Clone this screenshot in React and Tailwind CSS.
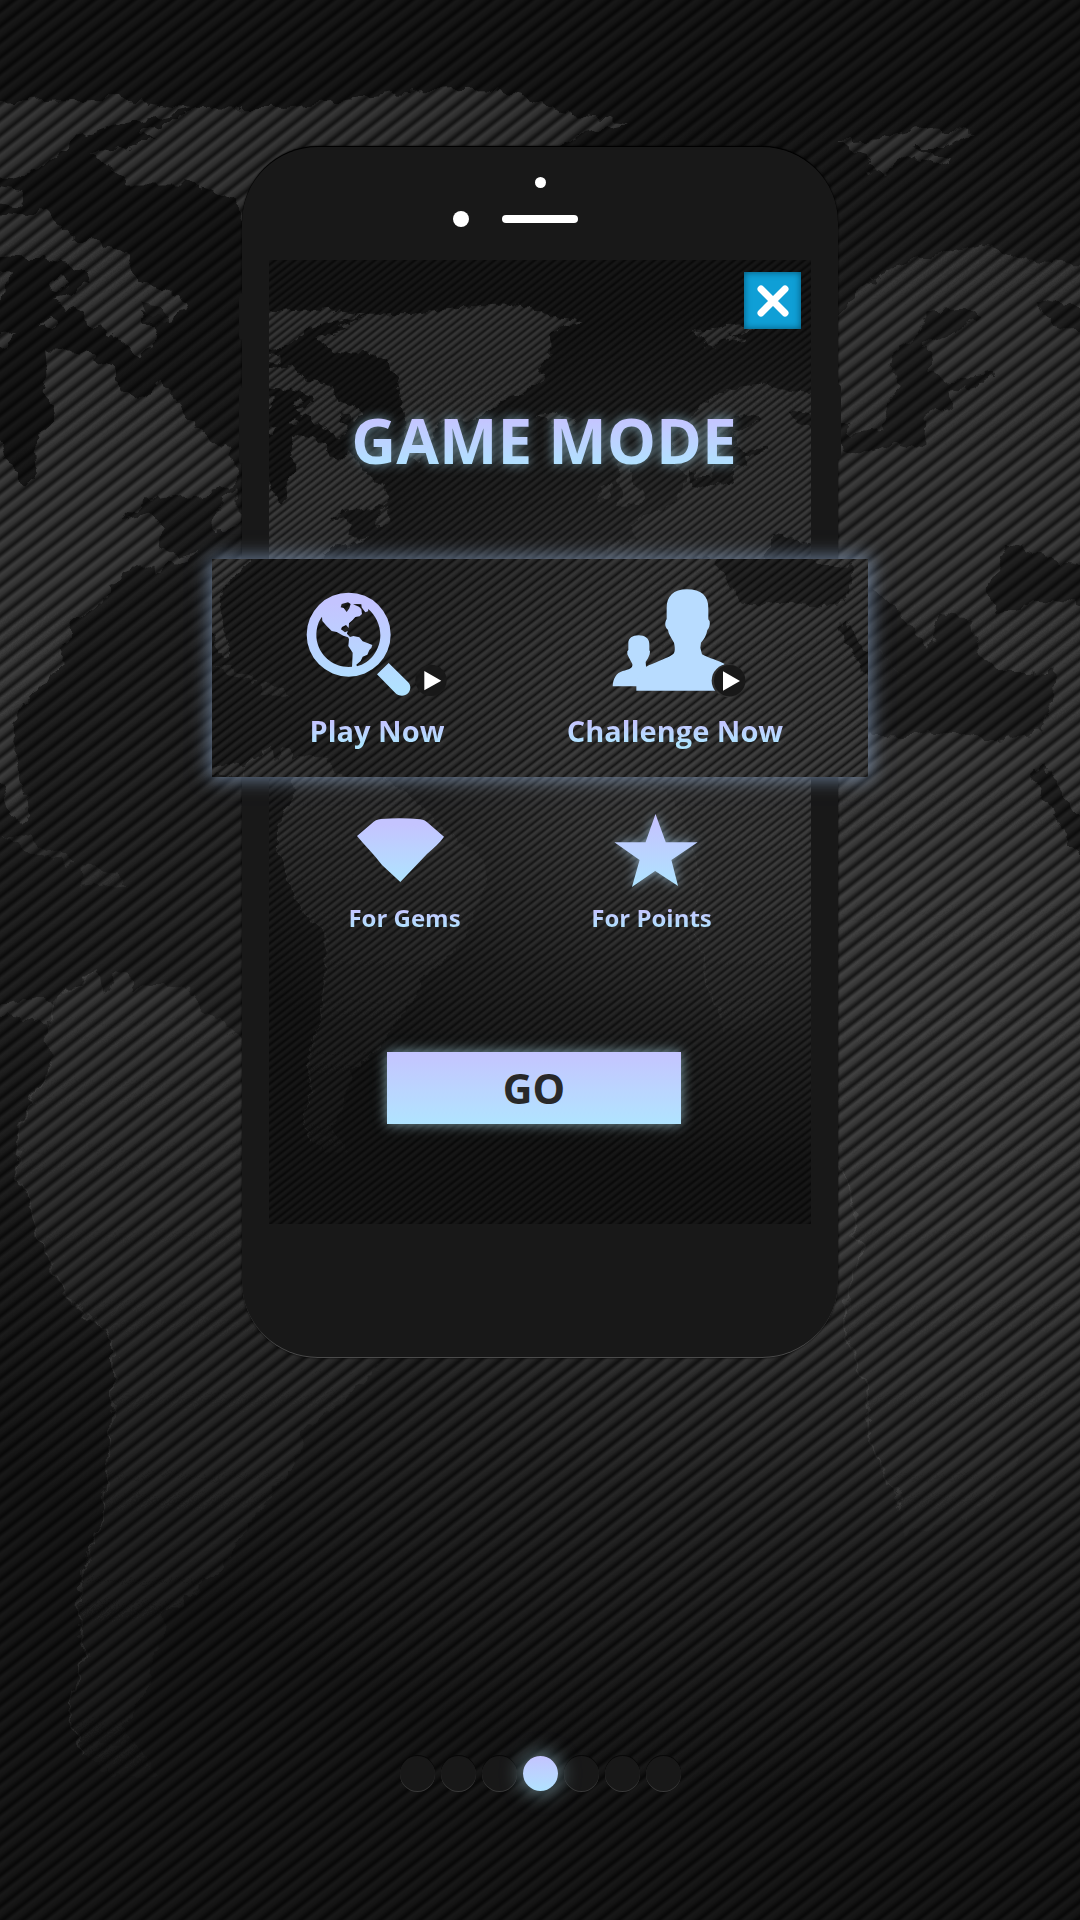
import { useId } from "react";

const TEXT_GRADIENT = "bg-linear-to-b from-[#c6c2ff] from-20% to-[#aee4ff] to-85% bg-clip-text text-transparent";

function WorldMap({ viewBox = "0 0 882 1568" }) {
  const id = useId();
  const ref = (name) => `url(#${id}${name})`;
  return (
    <svg
      className="absolute inset-0 h-full w-full"
      viewBox={viewBox}
      preserveAspectRatio="xMidYMid slice"
      aria-hidden="true"
    >
      <defs>
        <radialGradient id={id + "light"} gradientUnits="userSpaceOnUse" cx="0" cy="0" r="1" gradientTransform="translate(820 780) scale(1000 700)">
          <stop offset="0" stopColor="#505050" />
          <stop offset="0.35" stopColor="#505050" stopOpacity="0.72" />
          <stop offset="0.7" stopColor="#505050" stopOpacity="0.26" />
          <stop offset="1" stopColor="#505050" stopOpacity="0" />
        </radialGradient>
        <linearGradient id={id + "land"} gradientUnits="userSpaceOnUse" x1="0" y1="70" x2="0" y2="1450">
          <stop offset="0" stopColor="#373737" />
          <stop offset="0.35" stopColor="#3f3f3f" />
          <stop offset="0.55" stopColor="#404040" stopOpacity="0.75" />
          <stop offset="0.75" stopColor="#383838" stopOpacity="0.5" />
          <stop offset="1" stopColor="#2c2c2c" stopOpacity="0.2" />
        </linearGradient>
        <linearGradient id={id + "line"} x1="0" y1="0" x2="0" y2="1">
          <stop offset="0" stopColor="#000" stopOpacity="0" />
          <stop offset="0.35" stopColor="#000" stopOpacity="0.2" />
          <stop offset="0.7" stopColor="#000" stopOpacity="0.7" />
          <stop offset="1" stopColor="#000" stopOpacity="0" />
        </linearGradient>
        <pattern id={id + "stripes"} patternUnits="userSpaceOnUse" width="20" height="10" patternTransform="rotate(-38)">
          <rect width="20" height="10" fill={ref("line")} />
        </pattern>
        <filter id={id + "coast"} x="-5%" y="-5%" width="110%" height="110%">
          <feTurbulence type="fractalNoise" baseFrequency="0.07" numOctaves="3" seed="4" />
          <feDisplacementMap in="SourceGraphic" scale="14" xChannelSelector="R" yChannelSelector="G" />
        </filter>
      </defs>
      <rect width="882" height="1568" fill="#181818" />
      <rect width="882" height="1568" fill={ref("light")} />
      <g filter={ref("coast")}>
        <g fill={ref("land")}>
          {/* Arctic islands and Canada */}
          <path d="M-20 85L50 81L95 81L155 89L100 102L60 115L38 135L10 147L-20 146Z" />
          <path d="M-20 152L20 157L15 170L-20 165Z" />
          <path d="M-20 172L20 178L38 173L62 195L78 197L86 203L102 205L112 230L135 237L150 247L152 255L138 260L120 255L112 252L128 268L126 285L115 290L105 284L85 270L62 255L42 245L60 240L74 230L68 220L50 215L30 211L-20 208Z" />
          <path d="M-20 215L8 222L6 243L-20 250Z" />
          <ellipse cx="49" cy="233" rx="8" ry="5" />
          <ellipse cx="42" cy="263" rx="8" ry="5" />
          {/* North America */}
          <path d="M-20 275L14 272L10 280L-20 290Z" />
          <path d="M-20 345L2 360L6 376L22 395L30 385L28 362L46 345L44 332L34 322L38 305L36 287L70 287L93 302L96 318L112 326L124 322L130 308L150 335L163 354L190 372L193 395L175 402L120 410L102 425L125 420L133 432L131 448L145 455L165 450L135 465L124 470L122 462L90 474L86 490L60 510L50 530L48 545L28 565L12 588L10 605L18 640L24 668L17 672L6 660L0 640L-20 635Z" />
          <path d="M172 432L184 405L194 398V430Z" />
          {/* Greenland */}
          <path d="M115 107L160 89L235 88L290 80L340 74L395 72L444 82L460 94L514 100L480 108L458 120V156L438 176L448 196L410 218L378 228L350 252L325 262L290 258L270 275L245 330L225 318L222 280L217 240L209 190L190 164L175 156L150 149L105 149L85 135L76 126L128 114Z" />
          {/* Iceland, Svalbard, Great Britain */}
          <path d="M435 252L455 250L500 258L495 270L455 275L460 262Z" />
          <path d="M682 116L715 114L735 109L760 105L797 108L770 120L745 120L775 130L770 138L745 126L722 144L708 138L710 128Z" />
          <path d="M570 326L588 334L592 365L612 380L600 398L566 400L578 378L568 362Z" />
          <path d="M540 368L558 365L556 388L538 390Z" />
          {/* Europe and Asia */}
          <path d="M902 215L868 215L840 212L800 201L785 205L745 212L725 220L695 243L680 265L656 299L652 330L668 340L680 352L665 390L640 404L610 415L590 430L600 455L550 462L548 508L575 515L608 495L632 466L660 470L680 495L700 510L715 530L745 560L902 560Z" />
          {/* Africa and Arabia */}
          <path d="M560 558L594 559L620 548L674 545L690 556L902 556V1030L855 1090L858 1135L840 1165L825 1210L790 1240L737 1254L736 1230L712 1180L708 1132L690 1088L695 1040L703 1028L697 990L686 950L668 900L640 855L570 850L508 828L490 792L486 742L484 700L496 662L512 634L533 612L534 586L553 580Z" />
          {/* Caribbean */}
          <path fillOpacity="0.6" d="M0 680L25 685L60 702L55 706L20 692Z" />
          <path fillOpacity="0.6" d="M68 708L95 712L102 722L70 724Z" />
          {/* South America */}
          <path d="M-20 820L10 820L35 814L45 825L55 806L82 792L86 812L92 794L105 796L110 806L152 808L180 838L219 862L290 930L348 974L354 1014L330 1075L308 1120L248 1170L244 1188L188 1270L182 1280L136 1318L120 1380L100 1408L130 1450L95 1450L65 1430L56 1392L70 1350L64 1338L68 1280L84 1240L93 1138L92 1092L49 1054L12 955L16 922L41 870L38 835L-20 828Z" />
        </g>
        {/* Enclosed seas and lakes */}
        <g fill="#1e1e1e" fillOpacity="0.85">
          <path d="M112 247L128 250L138 260L128 266Z" />
          <path d="M757 256L784 253L800 258L785 268L757 282L758 300L773 311L811 307L814 311L776 318L778 334L773 338L765 332L755 341L754 362L743 368L727 362L705 371L686 366L682 342L697 354L719 350L724 330L735 315L727 301L730 286L745 276Z" />
          <path d="M845 245L902 254V268L872 270L858 264Z" />
          <path d="M803 483L825 446L841 452L882 461L902 458V500L849 490L814 501Z" />
          <path fillOpacity="0.7" d="M674 546L690 560L712 600L745 601L757 597L814 603L852 598L862 567L861 547L838 548L814 548L800 534L795 505L768 502L757 530L743 508L716 480L680 492L704 510Z" />
          <path d="M842 630L856 628L875 660L902 690V735L880 700Z" />
        </g>
        <g fill="none" stroke="#fff" strokeOpacity="0.08" strokeWidth="1.5">
          <path d="M93 1092V1138L84 1240L68 1280L64 1338L70 1350L56 1392L65 1430" />
          <path d="M686 950L697 990L703 1028L695 1040L690 1088L708 1132L712 1180L736 1230" />
          <path d="M38 835L55 806L82 792M41 870L16 922L12 955L49 1054L92 1092" />
        </g>
      </g>
      <rect width="882" height="1568" fill={ref("stripes")} />
    </svg>
  );
}

function Tint({ id, y1, y2 }) {
  return (
    <linearGradient id={id} gradientUnits="userSpaceOnUse" x1="0" x2="0" y1={y1} y2={y2}>
      <stop offset="0.1" stopColor="#c4c4ff" />
      <stop offset="0.95" stopColor="#b0e2ff" />
    </linearGradient>
  );
}

function PlayBadge({ x }) {
  return (
    <g>
      <circle cx={x} cy="421" r="47" fill="#181818" />
      <path d={`M${x - 20} 393V451L${x + 31} 422Z`} fill="#fff" />
    </g>
  );
}

function GlobeSearchIcon() {
  return (
    <svg className="h-[105px] w-[142px]" viewBox="320 156 426 315" aria-hidden="true">
      <defs>
        <Tint id="globeTint" y1="158" y2="468" />
      </defs>
      <g fill="url(#globeTint)">
        <path fillRule="evenodd" d="M448 158A126 126 0 1 1 448 410A126 126 0 1 1 448 158ZM368 230C352 250 346 285 356 315C368 352 404 380 448 381L458 380L459 362L460 338L447 318L449 297L446 292L432 287L412 276L397 273L382 258L369 243ZM427 192L424 202L433 204L442 216L450 205L454 192L446 187ZM461 193L479 200L486 208L488 222L481 229L468 231L460 240L449 250L448 264L440 255L428 261L425 268L437 277L445 273L443 281L452 291L462 288L480 292L490 304L506 310L519 315L516 324L510 330L504 344L490 350L484 363L471 374L473 379C512 370 543 330 543 286C543 254 528 226 507 207L506 214L498 217L491 208L487 202L486 193L472 192Z" />
        <path d="M568 369L533 403L588 459C598 470 617 470 626 460C636 449 635 434 625 425Z" />
      </g>
      <PlayBadge x={695} />
    </svg>
  );
}

function PeopleIcon() {
  return (
    <svg className="ml-2 h-[108px] w-[134px]" viewBox="218 146 402 324" aria-hidden="true">
      <g fill="#b8dcff">
        <path d="M220 438C221 414 231 398 250 392C269 387 281 384 279 371L269 352L264 342V333L267 329V309C267 293 279 285 298 285C317 285 329 294 330 309V330L332 333L331 342L326 354L319 365L320 378L340 438Z" />
        <path d="M291 451V438C291 400 307 382 340 370C370 357 391 350 402 341C408 334 407 320 404 307C396 293 387 281 386 269C379 263 375 253 380 240L382 236V203C382 168 402 147 443 147C486 147 507 167 507 202V237L511 243C513 255 509 265 504 269C502 285 493 298 485 307L483 322L488 342C510 354 538 361 556 371L530 400V451Z" />
      </g>
      <circle cx="567" cy="421" r="50" fill="#303030" />
      <PlayBadge x={571} />
    </svg>
  );
}

function GemIcon() {
  return (
    <svg className="mr-2 h-[64px] w-[87px]" viewBox="88 117 261 192" aria-hidden="true">
      <defs>
        <Tint id="gemTint" y1="117" y2="309" />
      </defs>
      <path fill="url(#gemTint)" d="M88 171L131 134C140 125 149 121 160 120Q220 115 278 121C288 122 295 127 302 133L349 173C337 192 318 207 298 225L218 309L163 258C139 226 111 199 88 171Z" />
    </svg>
  );
}

function StarIcon() {
  return (
    <svg className="ml-2 h-[73px] w-[84px] overflow-visible drop-shadow-[0_0_6px_rgba(170,215,245,0.6)]" viewBox="863 98 251 220" aria-hidden="true">
      <defs>
        <Tint id="starTint" y1="98" y2="318" />
      </defs>
      <path fill="url(#starTint)" d="M987 98L1018 183H1114L1035 237L1055 315L986 270L916 318L939 237L863 183H957Z" />
    </svg>
  );
}

const modes = [
  { label: "Play Now", Icon: GlobeSearchIcon },
  { label: "Challenge Now", Icon: PeopleIcon },
];

const stakes = [
  { label: "For Gems", Icon: GemIcon },
  { label: "For Points", Icon: StarIcon },
];

const pages = [1, 2, 3, 4, 5, 6, 7];

export default function App() {
  return (
    <div className="relative flex min-h-screen flex-col items-center overflow-hidden bg-[#101010] pt-[146px] pb-[129px] font-['Open_Sans','Noto_Sans',sans-serif]">
      <WorldMap />

      <div className="relative w-full max-w-[596px] rounded-[76px] border-t border-b border-t-black border-b-[#4a4a4a] bg-[#181818] px-[27px] pt-[30px] pb-[133px] shadow-[0_0_2px_#000]">
        <span className="absolute top-[146px] -left-[3px] h-[47px] w-1 rounded-l-sm bg-[#181818]" />
        <span className="absolute top-[240px] -left-[3px] h-[77px] w-1 rounded-l-sm bg-[#181818]" />
        <span className="absolute top-[237px] -right-[3px] h-[76px] w-1 rounded-r-sm bg-[#181818]" />

        <div className="mx-auto size-[11px] rounded-full bg-white" />
        <div className="mt-[23px] mb-[33px] flex h-4 items-center justify-center gap-[33px]">
          <span className="size-4 rounded-full bg-white" />
          <span className="h-2 w-[76px] rounded-full bg-white" />
          <span className="size-4" />
        </div>

        <main className="relative flex flex-col pb-[100px]">
          <WorldMap />

          <button
            type="button"
            aria-label="Close"
            className="relative mt-3 mr-[10px] grid size-[57px] place-items-center self-end bg-[#0f9fd6] shadow-[inset_0_0_7px_#05506f]"
          >
            <svg className="size-8" viewBox="0 0 32 32" aria-hidden="true">
              <path d="M4 4L28 28M28 4L4 28" stroke="#fff" strokeWidth="7" strokeLinecap="round" />
            </svg>
          </button>

          <h1 className="relative mt-20 pl-2 text-center text-[62px] leading-[62px] font-bold whitespace-nowrap drop-shadow-[0_0_6px_rgba(150,200,220,0.7)]">
            <span className={TEXT_GRADIENT}>GAME MODE</span>
          </h1>

          <section className="relative -mx-[57px] mt-[88px] shadow-[0_0_18px_2px_rgba(135,160,195,0.75)]">
            <WorldMap viewBox="0 540 882 293" />
            <div className="relative grid grid-cols-2 pt-[30px] pr-11 pb-7 pl-4">
              {modes.map(({ label, Icon }) => (
                <button key={label} type="button" className="flex flex-col items-center justify-end gap-4">
                  <Icon />
                  <span className={`text-[29px] leading-9 font-bold whitespace-nowrap ${TEXT_GRADIENT}`}>{label}</span>
                </button>
              ))}
            </div>
          </section>

          <section className="relative mt-9 grid grid-cols-2 pr-9 pl-3">
            {stakes.map(({ label, Icon }) => (
              <button key={label} type="button" className="flex flex-col items-center gap-4">
                <span className="grid h-[74px] place-items-center">
                  <Icon />
                </span>
                <span className={`text-[24px] leading-[30px] font-bold ${TEXT_GRADIENT}`}>{label}</span>
              </button>
            ))}
          </section>

          <button
            type="button"
            className="relative mt-[119px] mr-3 h-[72px] w-[294px] self-center bg-linear-to-b from-[#c4c4ff] to-[#b0e4ff] text-[41px] leading-none font-bold text-[#282828] shadow-[0_0_12px_rgba(160,205,220,0.75)]"
          >
            GO
          </button>
        </main>
      </div>

      <nav className="relative mt-auto flex gap-1.5" aria-label="Pages">
        {pages.map((page) => (
          <button
            key={page}
            type="button"
            aria-label={`Page ${page}`}
            className={
              page === 4
                ? "relative size-[35px] rounded-full bg-linear-to-b from-[#c4c4ff] to-[#b0e2ff] shadow-[0_0_20px_2px_rgba(160,205,220,0.6)]"
                : "size-[35px] rounded-full bg-[#181818] shadow-[0_1px_0_#383838,0_-1px_0_#080808]"
            }
          />
        ))}
      </nav>
    </div>
  );
}
